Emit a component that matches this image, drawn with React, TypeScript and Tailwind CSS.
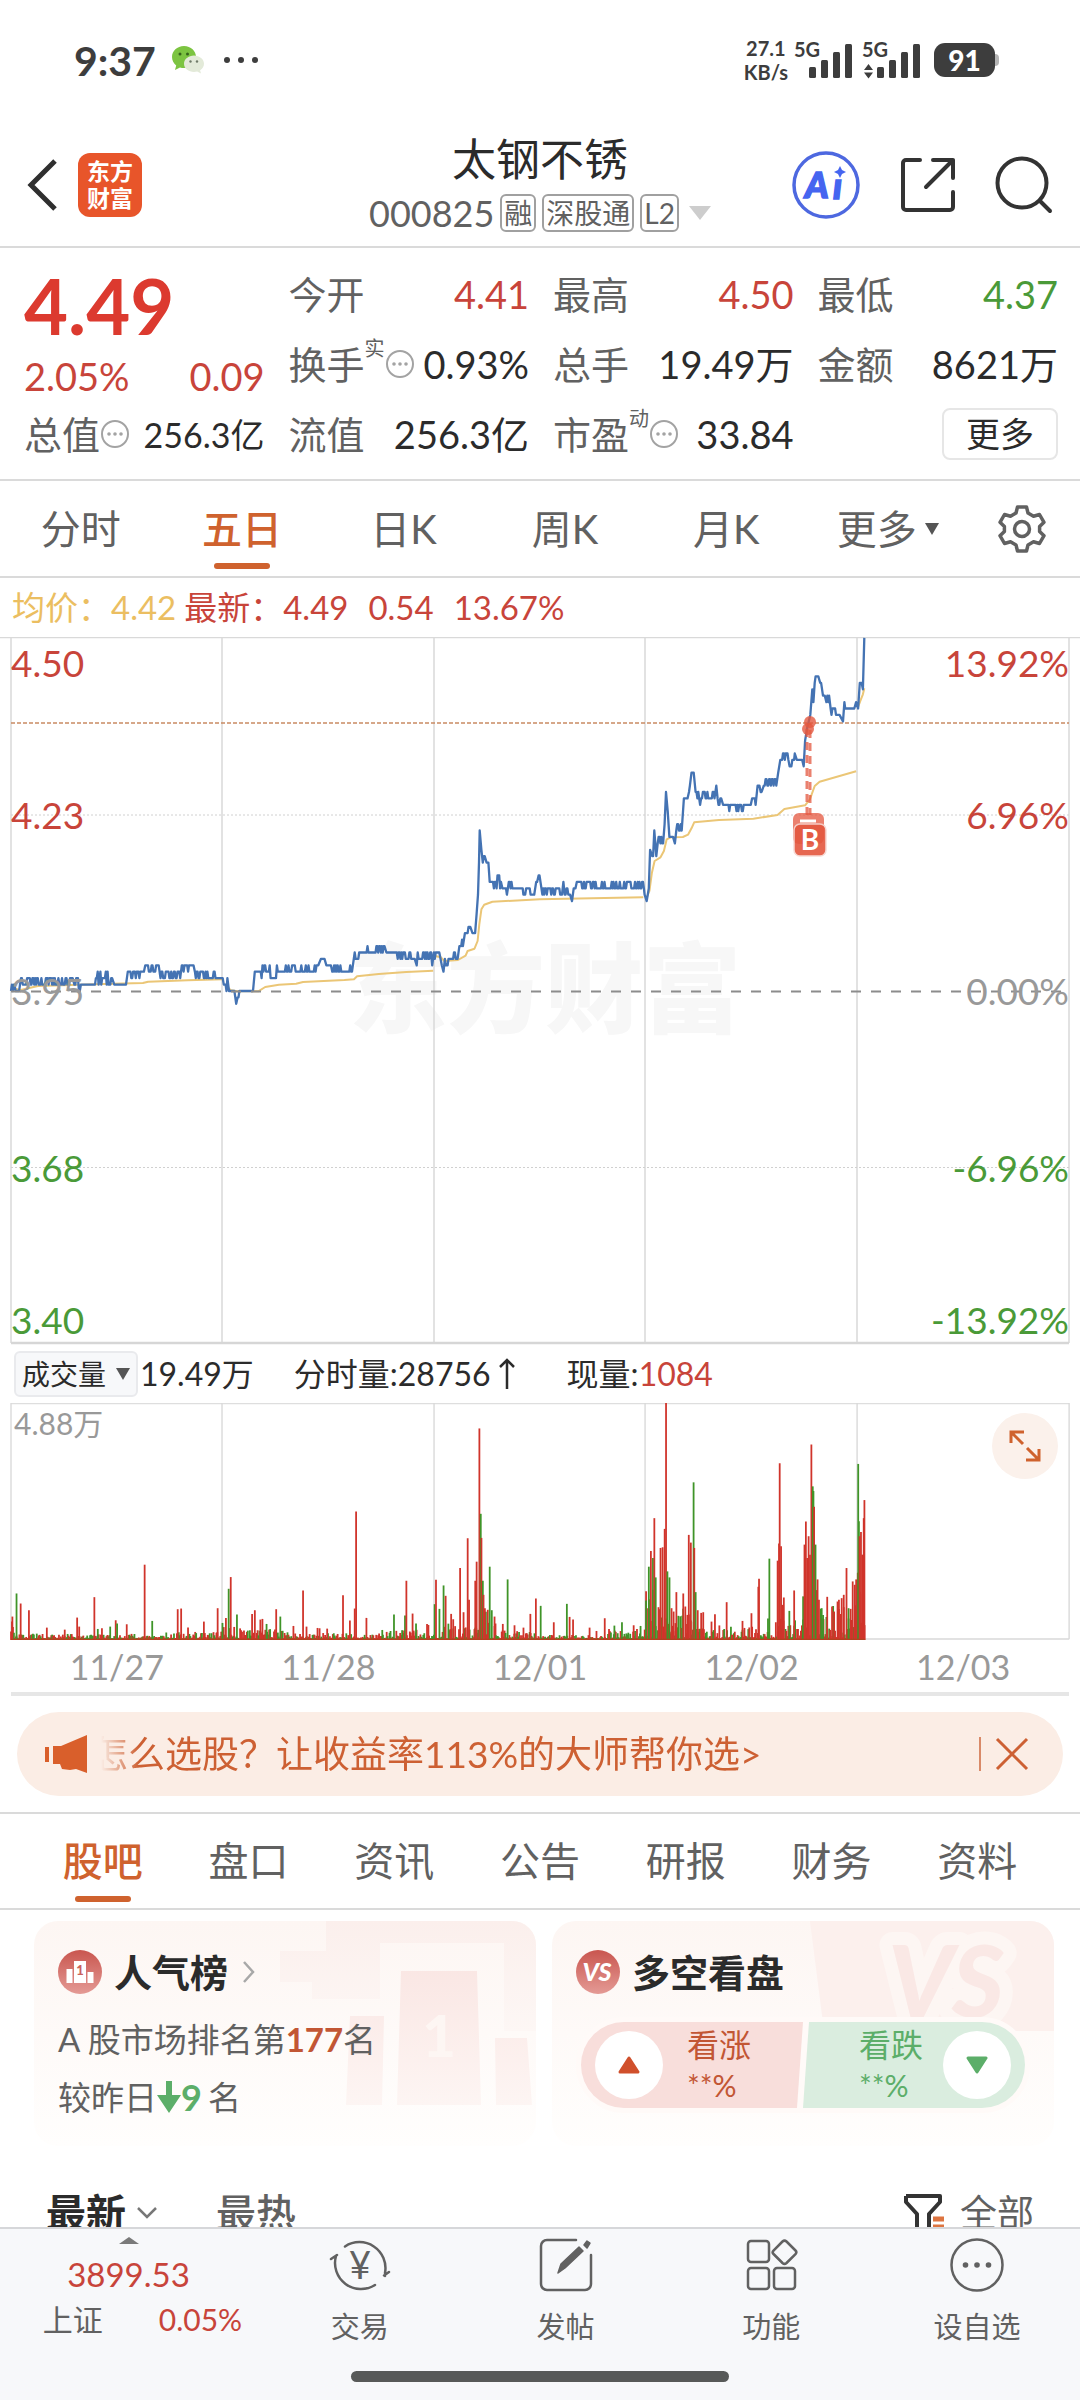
import React from 'react';

/* ---------- deterministic jitter for the intraday series ---------- */
function makeRandom(seed: number) {
  let s = seed;
  return () => {
    s = (s * 1103515245 + 12345) % 2147483648;
    return s / 2147483648;
  };
}

/* Horizontal chart units: 3136 across the full width of the page. */
const UNIT = 2.904;
const ZERO_Y = 354;
const TICK = 6.42;

type Segment = [from: number, to: number, low: number, high: number];

const PRICE: Segment[] = [
  [32, 44, -1, 1], [45, 60, 0, 1], [61, 75, 1, 2], [76, 212, 1, 2], [216, 232, 0, 2], [235, 272, 1, 1],
  [276, 328, 1, 3], [332, 368, 1, 2], [371, 418, 2, 3], [422, 463, 3, 4], [466, 524, 2, 3], [528, 562, 3, 4],
  [566, 640, 2, 3], [644, 648, 2, 2], [650, 662, 0, 2], [665, 684, -1, 0], [686, 687, -2, -2], [690, 726, -1, 0],
  [732, 736, 0, 1], [740, 748, 3, 3], [752, 860, 2, 4], [862, 926, 3, 4], [932, 943, 5, 5], [948, 962, 4, 4],
  [965, 1024, 3, 4], [1030, 1060, 5, 6], [1062, 1118, 6, 7], [1122, 1140, 6, 6], [1142, 1206, 5, 6], [1210, 1210, 4, 4],
  [1213, 1252, 5, 6], [1255, 1256, 4, 4], [1260, 1278, 5, 6], [1283, 1284, 4, 4], [1288, 1288, 3, 3], [1292, 1304, 4, 5], [1308, 1330, 5, 6],
  [1334, 1346, 7, 8], [1350, 1354, 9, 9], [1358, 1368, 9, 10], [1372, 1380, 9, 9], [1384, 1384, 12, 12], [1388, 1388, 15, 15],
  [1391, 1391, 20, 20], [1393, 1393, 25, 25], [1398, 1398, 22, 22], [1402, 1402, 20, 20], [1405, 1410, 21, 21], [1413, 1419, 20, 20],
  [1422, 1426, 17, 17], [1429, 1456, 16, 18], [1459, 1470, 16, 16], [1472, 1472, 15, 15], [1475, 1488, 16, 17], [1492, 1518, 16, 16],
  [1520, 1552, 15, 16], [1557, 1560, 17, 17], [1564, 1568, 18, 18], [1575, 1578, 15, 16], [1580, 1632, 15, 16], [1636, 1636, 17, 17],
  [1640, 1656, 15, 16], [1661, 1661, 14, 14], [1666, 1672, 16, 16], [1675, 1870, 16, 17], [1872, 1874, 15, 15], [1878, 1878, 14, 14],
  [1884, 1884, 16, 16], [1888, 1890, 21, 22], [1894, 1898, 21, 22], [1900, 1900, 25, 25], [1906, 1906, 21, 21], [1910, 1926, 23, 24],
  [1930, 1930, 26, 26], [1934, 1934, 31, 31], [1939, 1939, 28, 28], [1944, 1956, 24, 25], [1960, 1960, 23, 23], [1964, 1982, 25, 26],
  [1986, 1998, 29, 30], [2001, 2004, 31, 32], [2008, 2010, 34, 34], [2012, 2016, 34, 34], [2020, 2030, 30, 31], [2033, 2033, 29, 29],
  [2036, 2076, 30, 31], [2080, 2080, 32, 32], [2084, 2096, 29, 30], [2100, 2116, 29, 29], [2118, 2182, 28, 29], [2184, 2196, 29, 30],
  [2200, 2206, 32, 32], [2209, 2214, 31, 33], [2218, 2256, 32, 33], [2260, 2262, 34, 34], [2266, 2290, 36, 37], [2293, 2306, 35, 36], [2308, 2308, 37, 37],
  [2314, 2330, 36, 36], [2334, 2334, 35, 35], [2338, 2338, 39, 39], [2344, 2344, 41, 41], [2353, 2353, 43, 43], [2359, 2359, 47, 47],
  [2362, 2362, 45, 45], [2366, 2377, 48, 49], [2382, 2385, 47, 48], [2390, 2396, 46, 46], [2400, 2408, 45, 46], [2412, 2434, 43, 44],
  [2438, 2438, 43, 43], [2448, 2448, 42, 42], [2452, 2456, 44, 45], [2460, 2482, 44, 44], [2486, 2488, 45, 46], [2492, 2492, 44, 44], [2497, 2503, 47, 48],
  [2506, 2506, 47, 47], [2510, 2510, 55, 55],
];

function pricePoints() {
  const rnd = makeRandom(7);
  const out: string[] = [];
  PRICE.forEach(([from, to, low, high]) => {
    let level = low;
    for (let x = from; x <= to; x += 2.6) {
      if (rnd() > 0.25) level = low + Math.round(rnd() * (high - low));
      out.push(`${(x / UNIT).toFixed(1)},${(ZERO_Y - level * TICK).toFixed(1)}`);
    }
  });
  return out.join(' ');
}

/* Average price: one list of points per session (x in chart units, y in thirds of a viewBox unit). */
const AVERAGE: [number, number][][] = [
  [[36, 1072], [60, 1077], [110, 1065], [230, 1061], [300, 1059], [415, 1056], [430, 1052], [545, 1048], [647, 1045]],
  [[655, 1062], [670, 1078], [690, 1081], [750, 1081], [770, 1068], [810, 1061], [860, 1058], [880, 1053], [1000, 1047], [1028, 1045], [1037, 1036], [1100, 1029], [1180, 1023], [1258, 1019]],
  [[1263, 975], [1280, 979], [1290, 990], [1330, 987], [1352, 974], [1358, 960], [1378, 953], [1387, 930], [1392, 880], [1398, 835], [1406, 821], [1430, 812], [1568, 805], [1868, 799]],
  [[1878, 800], [1886, 780], [1893, 725], [1901, 690], [1918, 679], [1928, 660], [1936, 625], [1948, 619], [1983, 618], [1998, 611], [2008, 592], [2016, 574], [2088, 567], [2188, 563], [2258, 552], [2278, 534], [2338, 523], [2352, 505], [2366, 465], [2380, 452], [2418, 441], [2486, 421]],
  [[2492, 228], [2500, 205], [2506, 190], [2510, 172]],
];

function averagePoints(list: [number, number][]) {
  return list.map(([x, y]) => `${(x / UNIT).toFixed(1)},${(y / 3 - 6).toFixed(1)}`).join(' ');
}

/* Volume: x in 1568ths of the width, top of each bar, colour. */
const SPIKES = `18,705,r 24,636,g 30,666,r 42,686,r 68,738,r 94,744,r 112,708,r 115,735,r 137,647,r 142,742,g 148,740,r 160,735,g 168,716,r 170,726,g 184,728,r 210,550,r 221,718,g 258,683,r 263,681,r 273,738,r 296,720,r 316,680,r
323,724,g 328,709,r 332,622,g 335,587,r 344,699,g 340,736,r 366,697,r 370,686,r 378,714,r 381,712,r 387,727,g 401,683,r 407,705,g 426,733,r 440,627,r 445,735,r 461,739,r 464,740,r 475,741,r 498,641,r 508,717,r 515,681,r 517,391,r 532,709,r 555,745,g 572,699,g 588,702,g 590,598,r 599,696,r 604,726,g 620,727,r 622,730,r
631,668,g 633,595,r 638,682,g 644,612,g 647,643,r 655,697,r 658,713,r 668,560,r 673,692,r 679,471,r 681,655,r 690,598,r 692,541,r 696,143,r 698,398,g 699,470,r 701,598,g 702,640,r 704,680,r 711,556,g 714,686,g 718,705,r 730,727,r 737,594,g 747,731,r 760,738,r 770,697,r 778,651,r 785,673,g 804,722,r 823,667,g 827,706,r 832,714,r 856,738,r 866,748,r 878,710,r 892,732,g 903,722,g 920,731,r 930,733,g
938,657,g 942,556,g 945,509,r 948,530,g 950,411,r 952,588,g 956,677,r 959,500,r 962,498,r 965,443,r 967,66,r 969,570,g 972,588,g 975,680,r 978,690,r 982,632,r 992,636,r 995,675,r 998,700,r 1000,461,r 1003,484,r 1007,304,g 1008,500,r 1010,632,g 1013,686,r 1018,694,r 1021,692,r 1033,720,r 1038,698,r 1055,662,r 1078,718,r 1091,695,r 1101,616,r 1102,592,r 1115,711,g 1117,532,g 1129,538,r 1131,487,r 1132,247,r 1134,495,r 1136,670,r 1138,648,r 1146,688,g 1153,627,r 1166,714,g 1168,490,r 1170,421,r 1172,530,r 1174,465,r 1176,520,r 1178,191,r 1180,316,g 1181,330,g 1182,377,r 1184,490,g 1187,594,r 1189,655,r 1193,680,g 1195,700,g 1201,646,r 1208,675,r 1211,690,r 1216,660,r 1218,655,r 1222,650,r 1225,640,r 1229,560,r 1232,680,g 1235,682,r 1238,600,r 1241,610,r 1243,594,r
1246,249,g 1247,420,g 1248,465,r 1250,452,r 1252,520,r 1254,411,r 1255,357,r`
  .split(/\s+/)
  .map((item) => {
    const [x, y, c] = item.split(',');
    return { x: Number(x), y: Number(y) - 67, up: c === 'r' };
  });

const NOISE: [number, number, number][] = [
  [16, 24, 60], [24, 100, 16], [100, 200, 14], [200, 240, 8], [240, 322, 20], [322, 360, 34], [360, 430, 28], [430, 560, 16],
  [560, 630, 26], [630, 690, 44], [690, 720, 90], [720, 790, 24], [790, 880, 10], [880, 938, 30], [938, 975, 150],
  [975, 1015, 90], [1015, 1125, 40], [1125, 1166, 70], [1166, 1190, 170], [1190, 1244, 100], [1244, 1256, 230],
];

function noiseBars() {
  const rnd = makeRandom(42);
  const out: { x: number; y: number; up: boolean }[] = [];
  NOISE.forEach(([from, to, max]) => {
    for (let x = from; x < to; x += 1.4) {
      const r = rnd();
      out.push({ x, y: 706 - 3 - max * r * r, up: rnd() > 0.38 });
    }
  });
  return out;
}

const PRICE_PATH = pricePoints();
const BARS = [...noiseBars(), ...SPIKES];
const GRID_X = [11, 222, 434, 645, 857, 1069];

/* ---------- small icons ---------- */
const Info = () => (
  <svg viewBox="0 0 30 30" className="h-[30px] w-[30px] shrink-0" fill="none" stroke="#a3a3a3" strokeWidth="2">
    <circle cx="15" cy="15" r="13" />
    <g fill="#a3a3a3" stroke="none">
      <circle cx="9" cy="15" r="1.8" /><circle cx="15" cy="15" r="1.8" /><circle cx="21" cy="15" r="1.8" />
    </g>
  </svg>
);

const Signal = ({ data }: { data?: boolean }) => (
  <div className="relative h-[40px] w-[60px]">
    <span className="absolute left-0 top-0 text-[20px] font-bold leading-[18px]">5G</span>
    <svg viewBox="0 0 60 40" className="h-full w-full" fill="#3d3d3d">
      <rect x="15" y="27" width="7" height="11" rx="1.5" /><rect x="27" y="20" width="7" height="18" rx="1.5" />
      <rect x="39" y="12" width="7" height="26" rx="1.5" /><rect x="51" y="4" width="7" height="34" rx="1.5" />
      {data && <path d="M2 30l4.500-6 4.500 6zM2 32.500l4.500 6 4.500-6z" />}
    </svg>
  </div>
);

const Stat = ({ label, sup, info, value, tone = 'text-[#2b2b2b]', small }: {
  label: string; sup?: string; info?: boolean; value: string; tone?: string; small?: boolean;
}) => (
  <div className="flex h-[70px] items-center justify-between whitespace-nowrap">
    <div className="flex items-center">
      <span className="text-[38px] text-[#616161]">{label}</span>
      {sup && <span className="mb-8 text-[20px] text-[#616161]">{sup}</span>}
      {info && <Info />}
    </div>
    <span className={small ? 'text-[34px] ' + tone : 'text-[38px] ' + tone}>{value}</span>
  </div>
);

const NavItem = ({ label, children }: { label: string; children: React.ReactNode }) => (
  <button type="button" className="flex flex-1 flex-col items-center pt-2 text-[#616161]">
    <svg viewBox="0 0 64 58" className="h-[58px] w-[64px]" fill="none" stroke="#616161" strokeWidth="2.500" strokeLinecap="round" strokeLinejoin="round">
      {children}
    </svg>
    <span className="mt-2.5 text-[29px] leading-[44px]">{label}</span>
  </button>
);

const PERIODS = ['分时', '五日', '日K', '周K', '月K'];
const SECTIONS = ['股吧', '盘口', '资讯', '公告', '研报', '财务', '资料'];
const DATES = ['11/27', '11/28', '12/01', '12/02', '12/03'];

export default function App() {
  return (
    <div className="flex min-h-screen w-full flex-col overflow-hidden bg-white font-['Lato','Noto_Sans_CJK_SC',sans-serif] text-[#2b2b2b]">
      {/* status bar */}
      <div className="flex h-[120px] items-center justify-between pl-[74px] pr-[81px] text-[#3d3d3d]">
        <div className="flex items-center">
          <span className="text-[41px] font-bold leading-none">9:37</span>
          <svg viewBox="0 0 32 28" className="ml-4 h-7 w-8">
            <path d="M12 0C5 0 0 5 0 11c0 3.500 1.700 6.500 4.200 8.500L3 24l5-2.500c1.300.4 2.600.5 4 .5 7 0 12-5 12-11S19 0 12 0z" fill="#7cc441" />
            <circle cx="8" cy="8" r="1.500" fill="#35631a" /><circle cx="15.500" cy="8" r="1.500" fill="#35631a" />
            <path d="M22 9.500c-5.500 0-10 3.600-10 8.300S16.500 26 22 26c1.100 0 2.200-.2 3.200-.5L29 27.500l-.9-3.300c2.300-1.500 3.900-3.700 3.900-6.400 0-4.700-4.500-8.300-10-8.300z" fill="#e3ead9" />
            <circle cx="18.500" cy="15.500" r="1.200" fill="#6f7a68" /><circle cx="25" cy="15.500" r="1.200" fill="#6f7a68" />
          </svg>
          <div className="ml-5 flex gap-2">
            <i className="h-1.5 w-1.5 rounded-full bg-[#3d3d3d]" /><i className="h-1.5 w-1.5 rounded-full bg-[#3d3d3d]" /><i className="h-1.5 w-1.5 rounded-full bg-[#3d3d3d]" />
          </div>
        </div>
        <div className="flex items-center">
          <div className="mr-1.5 text-center text-[20px] font-bold leading-6">27.1<br />KB/s</div>
          <Signal />
          <div className="ml-2"><Signal data /></div>
          <div className="ml-3 flex h-[34px] w-[61px] items-center justify-center rounded-[11px] bg-[#3d3d3d] text-[28px] font-black text-white">91</div>
          <i className="h-3 w-1 rounded-r bg-[#b5b5b5]" />
        </div>
      </div>

      {/* title bar */}
      <header className="flex h-[128px] items-center border-b-2 border-[#dadada] px-[26px] pt-1">
        <div className="flex flex-1 items-center">
          <button type="button" aria-label="返回">
            <svg viewBox="0 0 32 54" className="h-[54px] w-8" fill="none" stroke="#2f2f2f" strokeWidth="5"><path d="M29 3L5 27l24 24" /></svg>
          </button>
          <div className="ml-5 flex h-16 w-16 flex-col items-center justify-center rounded-xl bg-[#e8552a] text-[23px] font-bold leading-[27px] text-white">
            <span>东方</span><span>财富</span>
          </div>
        </div>
        <div className="flex flex-col items-center">
          <h1 className="text-[44px] leading-[56px]">太钢不锈</h1>
          <div className="flex h-[52px] items-center gap-1.5 text-[#616161]">
            <span className="text-[36px]">000825</span>
            {['融', '深股通', 'L2'].map((t) => (
              <span key={t} className="flex h-[38px] items-center rounded-md border-2 border-[#a0a0a0] px-0.5 text-[28px]">{t}</span>
            ))}
            <svg viewBox="0 0 22 14" className="ml-1 h-3.5 w-[22px]"><path d="M0 0h22L11 14z" fill="#cdcdcd" /></svg>
          </div>
        </div>
        <div className="flex flex-1 items-center justify-end">
          <button type="button" aria-label="Ai">
            <svg viewBox="0 0 68 68" className="h-[68px] w-[68px]">
              <circle cx="34" cy="34" r="32" fill="none" stroke="#4d68e0" strokeWidth="3.500" />
              <g fontSize="36" fontWeight="900" fontStyle="italic" fill="#4565f0" stroke="#4565f0" strokeWidth="1.500">
                <text x="13" y="47">A</text>
                <text x="41" y="48">ı</text>
              </g>
              <path d="M48 15l2 4 4 2-4 2-2 4-2-4-4-2 4-2z" fill="#4565f0" />
            </svg>
          </button>
          <button type="button" aria-label="分享" className="ml-[38px]">
            <svg viewBox="0 0 60 60" className="h-[60px] w-[60px]" fill="none" stroke="#333" strokeWidth="4" strokeLinecap="round" strokeLinejoin="round">
              <path d="M22 5H8a3 3 0 00-3 3v44a3 3 0 003 3h44a3 3 0 003-3V37" /><path d="M35 5h20v18M55 5L28 32" />
            </svg>
          </button>
          <button type="button" aria-label="搜索" className="ml-9">
            <svg viewBox="0 0 60 60" className="h-[60px] w-[60px]" fill="none" stroke="#333" strokeWidth="4" strokeLinecap="round">
              <circle cx="28" cy="28" r="24.500" /><path d="M46 46l10 10" />
            </svg>
          </button>
        </div>
      </header>

      {/* quote */}
      <section className="grid grid-cols-4 gap-x-6 border-b-2 border-[#dadada] pb-2.5 pl-6 pr-[22px] pt-[11px]">
        <div className="row-span-2 flex flex-col text-[#c8443a]">
          <span className="text-[76px] font-bold leading-[94px] text-[#dc3a2f]">4.49</span>
          <div className="flex justify-between text-[38px] leading-[46px]"><span>2.05%</span><span>0.09</span></div>
        </div>
        <Stat label="今开" value="4.41" tone="text-[#c8443a]" />
        <Stat label="最高" value="4.50" tone="text-[#c8443a]" />
        <Stat label="最低" value="4.37" tone="text-[#4a9a38]" />
        <Stat label="换手" sup="实" info value="0.93%" />
        <Stat label="总手" value="19.49万" />
        <Stat label="金额" value="8621万" />
        <Stat label="总值" info value="256.3亿" small />
        <Stat label="流值" value="256.3亿" />
        <Stat label="市盈" sup="动" info value="33.84" />
        <div className="flex items-center justify-end">
          <button type="button" className="h-[52px] rounded-lg border-2 border-[#e6e6e6] px-[22px] text-[34px] leading-none">更多</button>
        </div>
      </section>

      {/* period tabs */}
      <nav className="flex h-[97px] items-center border-b-2 border-[#dadada] pr-1 text-[40px] text-[#616161]">
        {PERIODS.map((p) => (
          <button key={p} type="button" className={p === '五日' ? 'relative h-full flex-[3] font-medium text-[#cf622e]' : 'h-full flex-[3]'}>
            {p}
            {p === '五日' && <i className="absolute bottom-[7px] left-1/2 h-1.5 w-14 -translate-x-1/2 rounded-full bg-[#cf622e]" />}
          </button>
        ))}
        <button type="button" className="flex h-full flex-[3] items-center justify-center gap-2">
          更多<svg viewBox="0 0 14 12" className="h-3 w-3.5"><path d="M0 0h14L7 12z" fill="#555" /></svg>
        </button>
        <button type="button" aria-label="设置" className="flex flex-[2] justify-center">
          <svg viewBox="0 0 50 50" className="h-[50px] w-[50px]" fill="none" stroke="#616161" strokeWidth="3.500" strokeLinejoin="round">
            <path d="M20.500 3h9l1.500 6 5.500 3.200 6-1.700 4.500 7.800-4.400 4.300v4.800l4.400 4.300-4.500 7.800-6-1.700L31 41l-1.500 6h-9L19 41l-5.500-3.200-6 1.700L3 31.700l4.400-4.300v-4.800L3 18.300l4.500-7.800 6 1.700L19 9z" />
            <circle cx="25" cy="25" r="7.500" />
          </svg>
        </button>
      </nav>

      {/* legend */}
      <div className="flex h-[59px] items-center pl-3 text-[33px] text-[#c8443a]">
        <span className="text-[#ebbe61]">均价：4.42</span>
        <span className="ml-2">最新：4.49</span>
        <span className="ml-5">0.54</span>
        <span className="ml-5">13.67%</span>
      </div>

      {/* price chart */}
      <svg viewBox="0 0 1080 708" className="block w-full" role="img" aria-label="五日走势">
        <text x="545" y="388" fontSize="98" fontWeight="900" textAnchor="middle" fill="#f7f7f7">东方财富</text>
        <path d="M0 .5H1080" stroke="#d9d9d9" strokeWidth="1.500" />
        {GRID_X.map((x) => <path key={x} d={`M${x} 0V706`} stroke="#d9d9d9" strokeWidth="1.500" />)}
        <path d="M11 706H1069" stroke="#d6d6d6" strokeWidth="2.500" />
        <path d="M11 178H1069M11 530.500H1069" stroke="#d0d0d0" strokeDasharray="2 2" />
        <path d="M11 86H1069" stroke="#c98a63" strokeWidth="1.500" strokeDasharray="4 2" />
        {AVERAGE.map((list, i) => (
          <polyline key={i} points={averagePoints(list)} fill="none" stroke="#ebc676" strokeWidth="2" strokeLinejoin="round" />
        ))}
        <polyline points={PRICE_PATH} fill="none" stroke="#4473b3" strokeWidth="2.300" strokeLinejoin="round" />
        <path d="M11 354.500H1069" stroke="#8c8c8c" strokeWidth="2" strokeDasharray="10 10" />
        <g fontSize="37">
          <g fill="#c8443a">
            <text x="11" y="40">4.50</text><text x="1069" y="40" textAnchor="end">13.92%</text>
            <text x="11" y="192">4.23</text><text x="1069" y="192" textAnchor="end">6.96%</text>
          </g>
          <g fill="#999">
            <text x="11" y="368">3.95</text><text x="1069" y="368" textAnchor="end">0.00%</text>
          </g>
          <g fill="#4a9a38">
            <text x="11" y="545">3.68</text><text x="1069" y="545" textAnchor="end">-6.96%</text>
            <text x="11" y="697">3.40</text><text x="1069" y="697" textAnchor="end">-13.92%</text>
          </g>
        </g>
        <g fill="#e4573f">
          <path d="M807 92V178" stroke="#e4573f" strokeWidth="3" strokeDasharray="8 5" opacity=".75" />
          <path d="M810 86V178" stroke="#e4573f" strokeWidth="3" strokeDasharray="8 5" strokeDashoffset="6" opacity=".75" />
          <circle cx="808" cy="92" r="6" opacity=".8" /><circle cx="810" cy="85" r="6" opacity=".8" />
          <rect x="793" y="176" width="31" height="31" rx="6" opacity=".75" />
          <path d="M800 184h16" stroke="#fff" strokeWidth="3" />
          <rect x="794" y="187" width="32" height="32" rx="6" stroke="#f6d5cf" strokeWidth="1.500" opacity=".9" />
          <text x="810" y="213" fontSize="28" fontWeight="700" textAnchor="middle" fill="#fff">B</text>
        </g>
      </svg>

      {/* volume legend */}
      <div className="flex h-[58px] items-center pl-3.5 text-[32px]">
        <label className="relative flex h-[46px] w-[124px] items-center rounded-md border-2 border-[#e9eaed] bg-[#f7f8fa]">
          <select aria-label="指标" className="w-full appearance-none bg-transparent pl-1.5 text-[28px] leading-9 outline-none">
            <option>成交量</option>
          </select>
          <svg viewBox="0 0 14 12" className="pointer-events-none absolute right-1.5 h-3 w-3.5"><path d="M0 0h14L7 12z" fill="#555" /></svg>
        </label>
        <span className="ml-0.5">19.49万</span>
        <span className="ml-10 flex items-center">分时量:28756
          <svg viewBox="0 0 20 32" className="ml-1.5 h-8 w-5" fill="none" stroke="#2b2b2b" strokeWidth="2.500"><path d="M10 31V2M3 9l7-7 7 7" /></svg>
        </span>
        <span className="ml-[50px]">现量:<span className="text-[#c8443a]">1084</span></span>
      </div>

      {/* volume chart */}
      <div className="relative h-[237px]">
        <svg viewBox="0 0 1568 708" preserveAspectRatio="none" className="block h-full w-full" role="img" aria-label="成交量">
          <path d="M16 2H1552" stroke="#dedede" strokeWidth="4" />
          <path d="M16 705H1552" stroke="#e2e2e2" strokeWidth="6" />
          {GRID_X.map((x) => <path key={x} d={`M${x * 1.452} 0V706`} stroke="#d9d9d9" strokeWidth="2" />)}
          {BARS.map((b, i) => (
            <path key={i} d={`M${b.x} 708V${b.y}`} stroke={b.up ? '#d0342b' : '#3f9428'} strokeWidth="2.600" />
          ))}
          <path d="M16 706H1256" stroke="#b0421f" strokeWidth="4" />
        </svg>
        <span className="absolute left-3.5 top-0.5 text-[30px] leading-9 text-[#999]">4.88万</span>
        <button type="button" aria-label="全屏" className="absolute right-[22px] top-[10px] flex h-[66px] w-[66px] items-center justify-center rounded-full bg-[#fbf1eb]">
          <svg viewBox="0 0 34 34" className="h-[34px] w-[34px]" fill="none" stroke="#cf622e" strokeWidth="3">
            <path d="M3 14V3h13M3 3l12 12M31 20v11H18M31 31L19 19" />
          </svg>
        </button>
      </div>
      <div className="mx-[11px] flex h-[56px] items-center border-b-4 border-[#e6e6e6] text-[34px] text-[#999]">
        {DATES.map((d) => <span key={d} className="flex-1 text-center">{d}</span>)}
      </div>

      {/* promo banner */}
      <div className="mx-[17px] mb-4 mt-4 flex h-[84px] shrink-0 items-center rounded-[42px] bg-[#fbede5] pl-7 pr-[34px] text-[#cd6033]">
        <svg viewBox="0 0 42 38" className="h-[38px] w-[42px]" fill="#d95f2b">
          <path d="M0 12h4v15H0zM8 11h8L42 0v38l-11-4-6 1-8-1-2-5H8z" />
        </svg>
        <a href="#pick" className="ml-1 flex-1 overflow-hidden whitespace-nowrap text-[37px] [mask-image:linear-gradient(to_right,transparent_10px,#000_48px)]">怎么选股？让收益率113%的大师帮你选&gt;</a>
        <i className="h-[34px] w-0.5 bg-[#d98a68]" />
        <button type="button" aria-label="关闭" className="ml-3.5">
          <svg viewBox="0 0 34 34" className="h-[34px] w-[34px]" fill="none" stroke="#cd6033" strokeWidth="3"><path d="M2 2l30 30M32 2L2 32" /></svg>
        </button>
      </div>

      {/* section tabs */}
      <nav className="flex h-[98px] items-center border-y-2 border-[#dadada] px-[30px] text-[40px] text-[#616161]">
        {SECTIONS.map((s) => (
          <button key={s} type="button" className={s === '股吧' ? 'relative h-full flex-1 font-medium text-[#cf622e]' : 'h-full flex-1'}>
            {s}
            {s === '股吧' && <i className="absolute bottom-[6px] left-1/2 h-1.5 w-14 -translate-x-1/2 rounded-full bg-[#cf622e]" />}
          </button>
        ))}
      </nav>

      {/* cards */}
      <div className="mt-[11px] flex gap-4 pl-[34px] pr-[26px]">
        <section className="relative h-[225px] flex-1 overflow-hidden rounded-3xl bg-linear-to-b from-[#fdf6f3] to-[#fffefd] px-6 pt-[26px]">
          <svg viewBox="0 0 260 225" className="absolute right-0 top-0 h-full w-[260px]">
            <defs>
              <linearGradient id="fade" x1="0" y1="0" x2="0" y2="1"><stop offset="0" stopColor="#fae7e4" /><stop offset="1" stopColor="#fdf5f3" /></linearGradient>
              <linearGradient id="halo" x1="0" y1="0" x2="0" y2="1"><stop offset="0" stopColor="#fbefec" /><stop offset="1" stopColor="#fdf7f5" /></linearGradient>
            </defs>
            <path d="M50 0h210v110h-32V22H104v56H36v-17H4V30h46z" fill="url(#halo)" />
            <path d="M125 50h76l4 134h-84zM74 95h34l-2 89H70zM219 117h32l5 67h-36z" fill="url(#fade)" />
            <text x="163" y="136" fontSize="58" fontWeight="900" textAnchor="middle" fill="#fdf6f3">1</text>
          </svg>
          <div className="relative flex h-[50px] items-center">
            <svg viewBox="0 0 44 44" className="h-11 w-11">
              <defs><linearGradient id="badge" x1="0" y1="0" x2="0" y2="1"><stop offset="0" stopColor="#c9564f" /><stop offset="1" stopColor="#e49a95" /></linearGradient></defs>
              <circle cx="22" cy="22" r="22" fill="url(#badge)" />
              <path d="M16 33V11h12v22zM8.500 33V19h6v14zM29.500 33V22h6v11z" fill="#fff" />
              <text x="22" y="25" fontSize="13" fontWeight="900" textAnchor="middle" fill="#c9615b">1</text>
            </svg>
            <h2 className="ml-3 text-[38px] font-bold">人气榜</h2>
            <svg viewBox="0 0 14 24" className="ml-3.5 h-6 w-3.5" fill="none" stroke="#a8a8a8" strokeWidth="2.500"><path d="M2 2l9 10-9 10" /></svg>
          </div>
          <p className="relative mt-4 whitespace-nowrap text-[33px] leading-[52px] text-[#616161]">A 股市场排名第<b className="text-[#c25634]">177</b>名</p>
          <p className="relative mt-1.5 flex items-center text-[33px] leading-[52px] text-[#616161]">较昨日
            <svg viewBox="0 0 24 32" className="h-8 w-6" fill="#5cae69"><path d="M9 0h6v14h9L12 32 0 14h9z" /></svg>
            <b className="mr-1.5 text-[36px] text-[#5cae69]">9</b>名
          </p>
        </section>

        <section className="relative h-[225px] flex-1 overflow-hidden rounded-3xl bg-linear-to-b from-[#fdf6f3] to-[#fffefd] px-6 pt-[26px]">
          <svg viewBox="0 0 250 225" className="absolute right-0 top-0 h-full w-[250px]">
            <path d="M6 0h244v110H20z" fill="#fcf0ed" />
            <text x="142" y="96" fontSize="100" fontWeight="900" fontStyle="italic" textAnchor="middle" fill="#fae8e5" stroke="#fdf6f3" strokeWidth="26" strokeLinejoin="round" paintOrder="stroke">VS</text>
          </svg>
          <div className="relative flex h-[50px] items-center">
            <svg viewBox="0 0 44 44" className="h-11 w-11">
              <circle cx="22" cy="22" r="22" fill="url(#badge)" />
              <text x="21" y="31" fontSize="25" fontWeight="900" fontStyle="italic" textAnchor="middle" fill="#fff">VS</text>
            </svg>
            <h2 className="ml-3 text-[38px] font-bold">多空看盘</h2>
          </div>
          <div className="relative mt-5 flex rounded-full border-[5px] border-[#fffaf8] bg-[#fffaf8]">
            <button type="button" className="flex h-[86px] flex-1 items-center rounded-l-full bg-[#f8dedb] pl-3.5 text-[#c25634] [clip-path:polygon(0_0,100%_0,calc(100%_-_6px)_100%,0_100%)]">
              <span className="flex h-[68px] w-[68px] items-center justify-center rounded-full bg-white">
                <svg viewBox="0 0 22 18" className="h-[18px] w-[22px]"><path d="M11 2l9 14H2z" fill="#d0502c" stroke="#d0502c" strokeWidth="3" strokeLinejoin="round" /></svg>
              </span>
              <span className="ml-6 flex flex-col text-left"><span className="text-[32px] leading-10">看涨</span><span className="text-[30px] leading-10">**%</span></span>
            </button>
            <button type="button" className="flex h-[86px] flex-1 items-center justify-end rounded-r-full bg-[#daeddf] pr-3.5 text-[#5cae69] [clip-path:polygon(6px_0,100%_0,100%_100%,0_100%)]">
              <span className="mr-5 flex flex-col text-left"><span className="text-[32px] leading-10">看跌</span><span className="text-[30px] leading-10">**%</span></span>
              <span className="flex h-[68px] w-[68px] items-center justify-center rounded-full bg-white">
                <svg viewBox="0 0 22 18" className="h-[18px] w-[22px]"><path d="M11 16l9-14H2z" fill="#5cae69" stroke="#5cae69" strokeWidth="3" strokeLinejoin="round" /></svg>
              </span>
            </button>
          </div>
        </section>
      </div>

      {/* feed header, running on beneath the bottom bar */}
      <div className="flex h-[81px] items-start overflow-hidden pl-[46px] pr-[46px] pt-[38px] text-[40px] leading-[58px] text-[#616161]">
        <button type="button" className="flex items-center font-bold text-[#2b2b2b]">最新
          <svg viewBox="0 0 22 14" className="ml-2.5 h-3.5 w-[22px]" fill="none" stroke="#777" strokeWidth="2.500"><path d="M2 2l9 9 9-9" /></svg>
        </button>
        <button type="button" className="ml-[58px] font-medium">最热</button>
        <button type="button" className="ml-auto flex items-center text-[37px]">
          <svg viewBox="0 0 42 40" className="mr-3.5 h-10 w-[42px]" fill="none" stroke="#333" strokeWidth="4" strokeLinejoin="round">
            <path d="M2 3h34v6L25 21v17M2 3v6l11 12v17" /><path d="M29 26h11M29 34h11" stroke="#dd7440" strokeWidth="5" />
          </svg>
          全部
        </button>
      </div>

      {/* bottom bar */}
      <footer className="relative flex-1 border-t-2 border-[#d6d7da] bg-[#f7f8fa]">
        <div className="flex">
          <button type="button" className="flex w-[257px] flex-col items-center pt-2">
            <svg viewBox="0 0 20 7" className="h-[7px] w-5"><path d="M10 0l10 7H0z" fill="#7a7a7a" /></svg>
            <span className="mt-1.5 text-[33px] leading-[48px] text-[#c8443a]">3899.53</span>
            <span className="flex gap-14 pl-7 text-[30px] leading-[42px]"><span className="text-[#616161]">上证</span><span className="text-[#c8443a]">0.05%</span></span>
          </button>
          <NavItem label="交易">
            <path d="M17 9.500A26 26 0 0157 36M47 48A26 26 0 018 19M3 22l6-4M57 39l-1-.5 5-3.500" />
            <text x="32" y="42" fontSize="38" textAnchor="middle" fill="#616161" stroke="none">¥</text>
          </NavItem>
          <NavItem label="发帖">
            <path d="M42 3H13a6 6 0 00-6 6v38a6 6 0 006 6h38a6 6 0 006-6V18" />
            <path d="M24 36l3-9 18-17 4 4-18 17zM50 8l3-4 3 2-3 5z" fill="#616161" strokeWidth="1.500" />
          </NavItem>
          <NavItem label="功能">
            <rect x="9" y="4" width="21" height="21" rx="3" /><rect x="9" y="31" width="21" height="21" rx="3" /><rect x="35" y="31" width="21" height="21" rx="3" />
            <path d="M43.500 4.500a3 3 0 014 0l9 9a2.500 2.500 0 010 3.500l-9 9a3 3 0 01-4 0l-9-9a2.500 2.500 0 010-3.500z" />
          </NavItem>
          <NavItem label="设自选">
            <circle cx="32" cy="28" r="25.500" />
            <g fill="#616161" stroke="none"><circle cx="20.500" cy="28" r="2.800" /><circle cx="32" cy="28" r="2.800" /><circle cx="43.500" cy="28" r="2.800" /></g>
          </NavItem>
        </div>
        <i className="absolute bottom-[18px] left-1/2 h-[11px] w-[378px] -translate-x-1/2 rounded-full bg-[#575958]" />
      </footer>
    </div>
  );
}
